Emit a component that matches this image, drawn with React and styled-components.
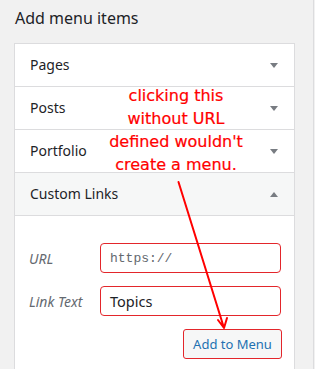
import React from "react";
import styled, { createGlobalStyle } from "styled-components";

const GlobalStyle = createGlobalStyle`
  html, body {
    margin: 0;
    padding: 0;
    background: #f1f1f1;
    font-family: "Noto Sans", "Open Sans", sans-serif;
    color: #1d2327;
  }
`;

const Page = styled.div`
  position: relative;
  display: flex;
  height: 369px;
  overflow: hidden;
  padding-left: 14px;
  box-sizing: border-box;
`;

const Column = styled.div`
  width: 281px;
  flex: none;
`;

const Strip = styled.div`
  margin-left: 18px;
  flex: 1;
  border-left: 1px solid #dcdcde;
`;

const Title = styled.h3`
  margin: 8px 0 15px 1px;
  font-size: 16px;
  line-height: 20px;
  font-weight: 400;
  color: #1d2327;
`;

const Panel = styled.div`
  background: #fff;
  border: 1px solid #dcdcde;
`;

const SectionHead = styled.div`
  height: 42px;
  display: flex;
  align-items: center;
  justify-content: space-between;
  padding: 0 16px 0 15px;
  border-bottom: 1px solid #dcdcde;
  background: ${(p) => (p.open ? "#f6f7f7" : "#fff")};
  font-size: 14px;
  line-height: 42px;
  color: #1d2327;
`;

const Caret = styled.span`
  width: 0;
  height: 0;
  border-left: 4px solid transparent;
  border-right: 4px solid transparent;
  ${(p) =>
    p.up
      ? "border-bottom: 5px solid #787c82;"
      : "border-top: 5px solid #787c82;"}
`;

const Body = styled.div`
  padding: 27px 13px 40px 14px;
  display: flex;
  flex-direction: column;
  gap: 13px;
`;

const Field = styled.div`
  display: flex;
  align-items: center;
`;

const Label = styled.span`
  width: 71px;
  flex: none;
  font-size: 14px;
  font-style: italic;
  color: #646970;
`;

const Input = styled.div`
  width: 181px;
  height: 30px;
  box-sizing: border-box;
  border: 1px solid #e3262b;
  border-radius: 4px;
  background: #fff;
  display: flex;
  align-items: center;
  padding-left: 9px;
  font-size: ${(p) => (p.mono ? "13px" : "14.5px")};
  font-family: ${(p) =>
    p.mono ? '"Liberation Mono", "DejaVu Sans Mono", monospace' : "inherit"};
  color: ${(p) => (p.mono ? "#646970" : "#1d2327")};
`;

const Actions = styled.div`
  display: flex;
  justify-content: flex-end;
  margin-right: -1px;
`;

const Button = styled.div`
  width: 99px;
  height: 30px;
  box-sizing: border-box;
  border: 1px solid #e3262b;
  border-radius: 3px;
  background: #f6f7f7;
  color: #2271b1;
  font-size: 13px;
  display: flex;
  align-items: center;
  justify-content: center;
`;

const Note = styled.div`
  position: absolute;
  left: 91px;
  top: 84px;
  width: 170px;
  text-align: center;
  color: #ff0000;
  font-family: "DejaVu Sans", Verdana, sans-serif;
  font-size: 16px;
  line-height: 23px;
  -webkit-text-stroke: 0.2px #ff0000;
`;

const Arrow = styled.svg`
  position: absolute;
  left: 0;
  top: 0;
  pointer-events: none;
`;

const sections = [
  { name: "Pages" },
  { name: "Posts" },
  { name: "Portfolio" },
  { name: "Custom Links", open: true },
];

export default function App() {
  return (
    <>
      <GlobalStyle />
      <Page>
        <Column>
          <Title>Add menu items</Title>
          <Panel>
            {sections.map((s) => (
              <SectionHead key={s.name} open={s.open}>
                {s.name}
                <Caret up={s.open} />
              </SectionHead>
            ))}
            <Body>
              <Field>
                <Label>URL</Label>
                <Input mono>https://</Input>
              </Field>
              <Field>
                <Label>Link Text</Label>
                <Input>Topics</Input>
              </Field>
              <Actions>
                <Button>Add to Menu</Button>
              </Actions>
            </Body>
          </Panel>
        </Column>
        <Strip />
        <Note>
          clicking this
          <br />
          without URL
          <br />
          defined wouldn't
          <br />
          create a menu.
        </Note>
        <Arrow width="315" height="369">
          <path
            d="M178.5 182 L224 328 M218 320 L224 328 L227 318"
            fill="none"
            stroke="#ff0000"
            strokeWidth="2"
            strokeLinecap="round"
            strokeLinejoin="round"
          />
        </Arrow>
      </Page>
    </>
  );
}
